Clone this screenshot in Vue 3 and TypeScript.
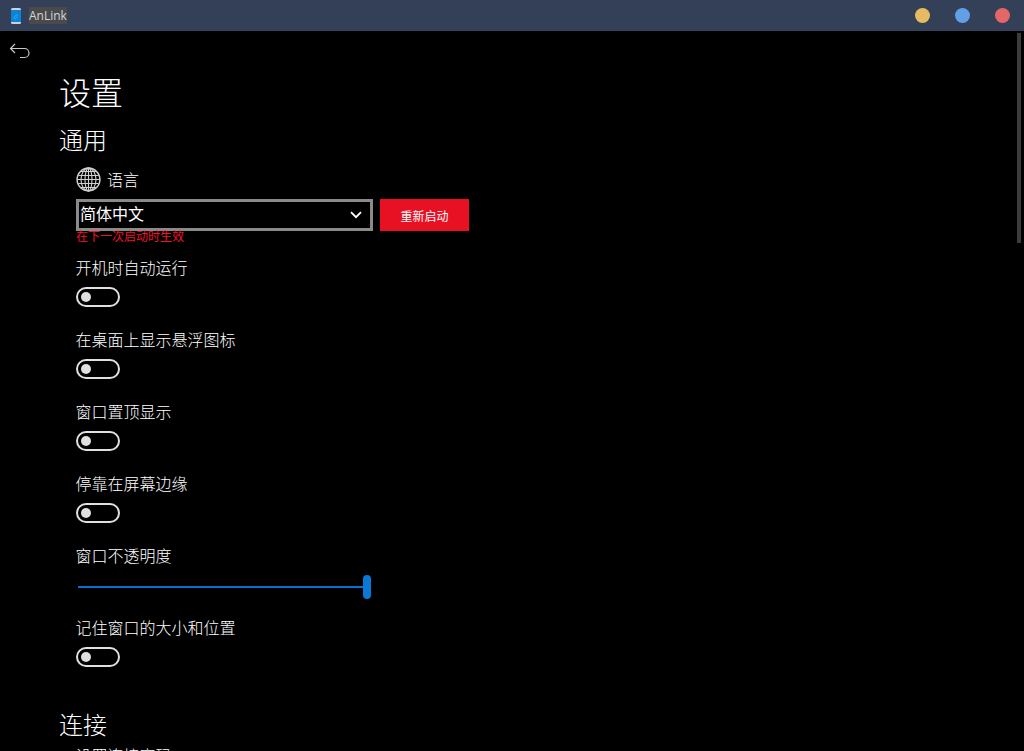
<script setup lang="ts">
const toggles1 = ['开机时自动运行', '在桌面上显示悬浮图标', '窗口置顶显示', '停靠在屏幕边缘']
</script>

<template>
  <div class="app">
    <header class="titlebar">
      <div class="brand">
        <svg class="logo" width="12" height="16" viewBox="0 0 12 16">
          <rect x="1" y="0" width="10" height="16" rx="1.5" fill="#c9d3da" />
          <rect x="1" y="2" width="10" height="12" fill="#0a84d8" />
          <path d="M4 11a3.5 3.5 0 0 1 4-4M5.5 11.5a2 2 0 0 1 2.3-2.4" fill="none" stroke="#3fb0ef" stroke-width="0.8" />
        </svg>
        <span class="appname">AnLink</span>
      </div>
      <div class="dots">
        <span class="dot yellow"></span>
        <span class="dot blue"></span>
        <span class="dot red"></span>
      </div>
    </header>

    <main class="body">
      <div class="backrow">
        <svg class="back" width="22" height="16" viewBox="0 0 22 16">
          <path d="M6 1 1.5 5.5 6 10M1.5 5.5H15.5a4.5 4.5 0 0 1 4.5 4.5 4.5 4.5 0 0 1-4.5 4.5H11" fill="none" stroke="#c8c8c8" stroke-width="1.2" />
        </svg>
      </div>

      <div class="content">
        <h1 class="title">设置</h1>
        <h2 class="section">通用</h2>

        <div class="group">
          <div class="lang-label">
            <svg class="globe" width="25" height="25" viewBox="0 0 25 25">
              <g fill="none" stroke="#d0d0d0" stroke-width="1.1">
                <circle cx="12.5" cy="12.5" r="11.4" stroke-width="1.5" />
                <ellipse cx="12.5" cy="12.5" rx="7.5" ry="11.4" />
                <ellipse cx="12.5" cy="12.5" rx="3.5" ry="11.4" />
                <path d="M12.5 1v23M1 12.5h23M2.4 8.5h20.2M2.4 16.5h20.2M5 4.5h15M5 20.5h15" />
              </g>
            </svg>
            <span class="lang-text">语言</span>
          </div>
          <div class="lang-controls">
            <div class="select">
              <span class="select-text">简体中文</span>
              <svg width="12" height="8" viewBox="0 0 12 8">
                <path d="M1 1.2 6 6.2 11 1.2" fill="none" stroke="#fff" stroke-width="1.8" />
              </svg>
            </div>
            <button class="restart">重新启动</button>
          </div>
          <div class="hint">在下一次启动时生效</div>

          <div v-for="t in toggles1" :key="t" class="item">
            <div class="label">{{ t }}</div>
            <div class="toggle"><span class="knob"></span></div>
          </div>

          <div class="item">
            <div class="label">窗口不透明度</div>
            <div class="slider">
              <div class="track"></div>
              <div class="rest"></div>
              <div class="thumb"></div>
            </div>
          </div>

          <div class="item">
            <div class="label">记住窗口的大小和位置</div>
            <div class="toggle"><span class="knob"></span></div>
          </div>
        </div>

        <h2 class="section second">连接</h2>
        <div class="group">
          <div class="label last">设置连接密码</div>
        </div>
      </div>

      <div class="scrollbar"></div>
    </main>
  </div>
</template>

<style>
html, body {
  margin: 0;
  background: #000;
  overflow: hidden;
}
</style>

<style scoped>
.app {
  width: 1024px;
  height: 751px;
  display: flex;
  flex-direction: column;
  background: #000;
  color: #fff;
  font-family: "Noto Sans CJK SC", "Noto Sans", sans-serif;
  overflow: hidden;
}
.titlebar {
  height: 31px;
  flex: none;
  background: #334058;
  display: flex;
  align-items: center;
  justify-content: space-between;
  padding: 0 14px 0 10px;
}
.brand {
  display: flex;
  align-items: center;
  gap: 7px;
}
.logo { display: block; }
.appname {
  font-family: "Open Sans", "Noto Sans", sans-serif;
  font-size: 12px;
  line-height: 17px;
  color: #cfd6de;
  background: #4a4a4a;
  padding: 0;
}
.dots {
  display: flex;
  gap: 25px;
}
.dot {
  width: 15px;
  height: 15px;
  border-radius: 50%;
}
.yellow { background: #e6bb62; }
.blue { background: #639fe6; }
.red { background: #e56666; }

.body {
  flex: 1;
  position: relative;
  overflow: hidden;
}
.backrow {
  height: 32px;
  padding-left: 9px;
  display: flex;
  align-items: flex-end;
}
.back { display: block; margin-bottom: 4px; }
.content {
  padding-left: 59px;
}
.title {
  margin: 6px 0 0;
  font-size: 32px;
  line-height: 44px;
  font-weight: 300;
  color: #fff;
}
.section {
  margin: 9px 0 0;
  font-size: 24px;
  line-height: 34px;
  font-weight: 300;
  color: #fff;
}
.section.second {
  margin-top: 33px;
}
.group {
  padding-left: 17px;
}
.lang-label {
  display: flex;
  align-items: center;
  gap: 6px;
  height: 25px;
  margin-top: 11px;
  font-size: 16px;
  font-weight: 300;
  color: #fff;
}
.lang-text {
  margin-bottom: 2px;
}
.globe { display: block; }
.lang-controls {
  display: flex;
  gap: 7px;
  margin-top: 7px;
}
.select {
  width: 297px;
  height: 32px;
  box-sizing: border-box;
  border: 3px solid #8a8a8a;
  display: flex;
  align-items: center;
  justify-content: space-between;
  padding: 0 8px 0 1px;
  font-size: 16px;
  font-weight: 400;
}
.select-text {
  margin-bottom: 4px;
  line-height: 22px;
}
.restart {
  width: 89px;
  height: 32px;
  border: none;
  padding: 0;
  background: #e81123;
  color: #fff;
  font-family: inherit;
  font-size: 12px;
  font-weight: 400;
}
.hint {
  font-size: 12px;
  line-height: 12px;
  margin-top: -1px;
  color: #f0122a;
  font-weight: 400;
}
.item {
  margin-top: 14px;
  height: 58px;
}
.label {
  font-size: 16px;
  line-height: 22px;
  font-weight: 300;
  color: #fff;
  margin-left: -0.5px;
}
.label.last {
  margin-top: 3px;
}
.toggle {
  width: 44px;
  height: 20px;
  box-sizing: border-box;
  border: 2px solid #e0e0e0;
  border-radius: 10px;
  margin-top: 9px;
  display: flex;
  align-items: center;
  padding-left: 3px;
}
.knob {
  width: 10px;
  height: 10px;
  border-radius: 50%;
  background: #e0e0e0;
}
.slider {
  position: relative;
  width: 296px;
  height: 24px;
  margin-top: 9px;
}
.track {
  position: absolute;
  left: 2px;
  top: 11px;
  width: 286px;
  height: 2px;
  background: #0a6fd1;
}
.rest {
  position: absolute;
  left: 288px;
  top: 11px;
  width: 6px;
  height: 2px;
  background: #666;
}
.thumb {
  position: absolute;
  left: 287px;
  top: 0;
  width: 8px;
  height: 24px;
  border-radius: 4px;
  background: #0a78d7;
}
.scrollbar {
  position: absolute;
  right: 3px;
  top: 2px;
  width: 4px;
  height: 210px;
  background: #3c3c3c;
}
</style>
